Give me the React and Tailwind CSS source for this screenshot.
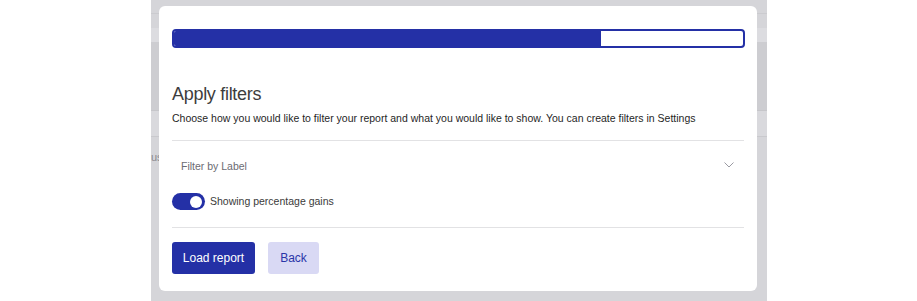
export default function App() {
  const font = { fontFamily: '"Liberation Sans", Arial, sans-serif' };
  return (
    <div className="relative w-[917px] h-[301px] bg-white overflow-hidden" style={font}>
      {/* backdrop with dimmed app behind */}
      <div className="ml-[151px] w-[616px] h-full bg-[#d5d5d9] flex flex-col">
        <div className="h-[13px]" />
        <div className="h-px bg-[#cbcbcf]" />
        <div className="h-[14px]" />
        <div className="h-[14px] bg-[#dcdce0]" />
        <div className="h-[68px] bg-[#cdcdd1]" />
        <div className="h-px bg-[#c6c6ca]" />
        <div className="h-[25px] bg-[#d9d9dd]" />
        <div className="h-px bg-[#c9c9cd]" />
        <div className="h-[15px]" />
        <div className="text-[11px] text-[#8a8a90] leading-none">us</div>
      </div>

      {/* modal */}
      <div className="absolute left-[159px] top-[6px] w-[598px] h-[285px] bg-white rounded-[6px] px-[13px] pt-[23px]">
        <div className="h-[19px] w-[573px] rounded-[4px] border-2 border-[#2430a6] bg-white overflow-hidden">
          <div className="h-full w-[75%] bg-[#2430a6]" />
        </div>

        <h2 className="mt-[34px] text-[18px] leading-[24px] font-light text-[#3d3d3d] tracking-[-0.3px]">
          Apply filters
        </h2>
        <p className="mt-[5px] text-[10.5px] leading-[14px] text-[#1f1f1f]">
          Choose how you would like to filter your report and what you would like to show. You can create filters in Settings
        </p>

        <div className="mt-[15px] h-px bg-[#e2e2e4]" />

        <div className="flex items-center justify-between pl-[9px] pr-[10px] h-[49px]">
          <span className="text-[10.5px] text-[#6b6b72] pt-[2px]">Filter by Label</span>
          <svg width="10" height="6" viewBox="0 0 10 6" className="mb-[1px]">
            <path d="M0.5 0.5 L5 5 L9.5 0.5" fill="none" stroke="#9a9aa2" strokeWidth="1" />
          </svg>
        </div>

        <div className="flex items-center gap-[5px] mt-[3px]">
          <div className="w-[33px] h-[17px] rounded-full bg-[#2430a6] flex items-center justify-end pr-[3px]">
            <div className="w-[12px] h-[12px] rounded-full bg-white" />
          </div>
          <span className="text-[10.5px] text-[#3a3a3a]">Showing percentage gains</span>
        </div>

        <div className="mt-[17px] h-px bg-[#e2e2e4]" />

        <div className="flex gap-[13px] mt-[14px]">
          <button className="w-[83px] h-[32px] rounded-[3px] bg-[#2430a6] text-white text-[12px]">Load report</button>
          <button className="w-[51px] h-[32px] rounded-[3px] bg-[#d9d9f4] text-[#2a35a8] text-[12px]">Back</button>
        </div>
      </div>
    </div>
  );
}
